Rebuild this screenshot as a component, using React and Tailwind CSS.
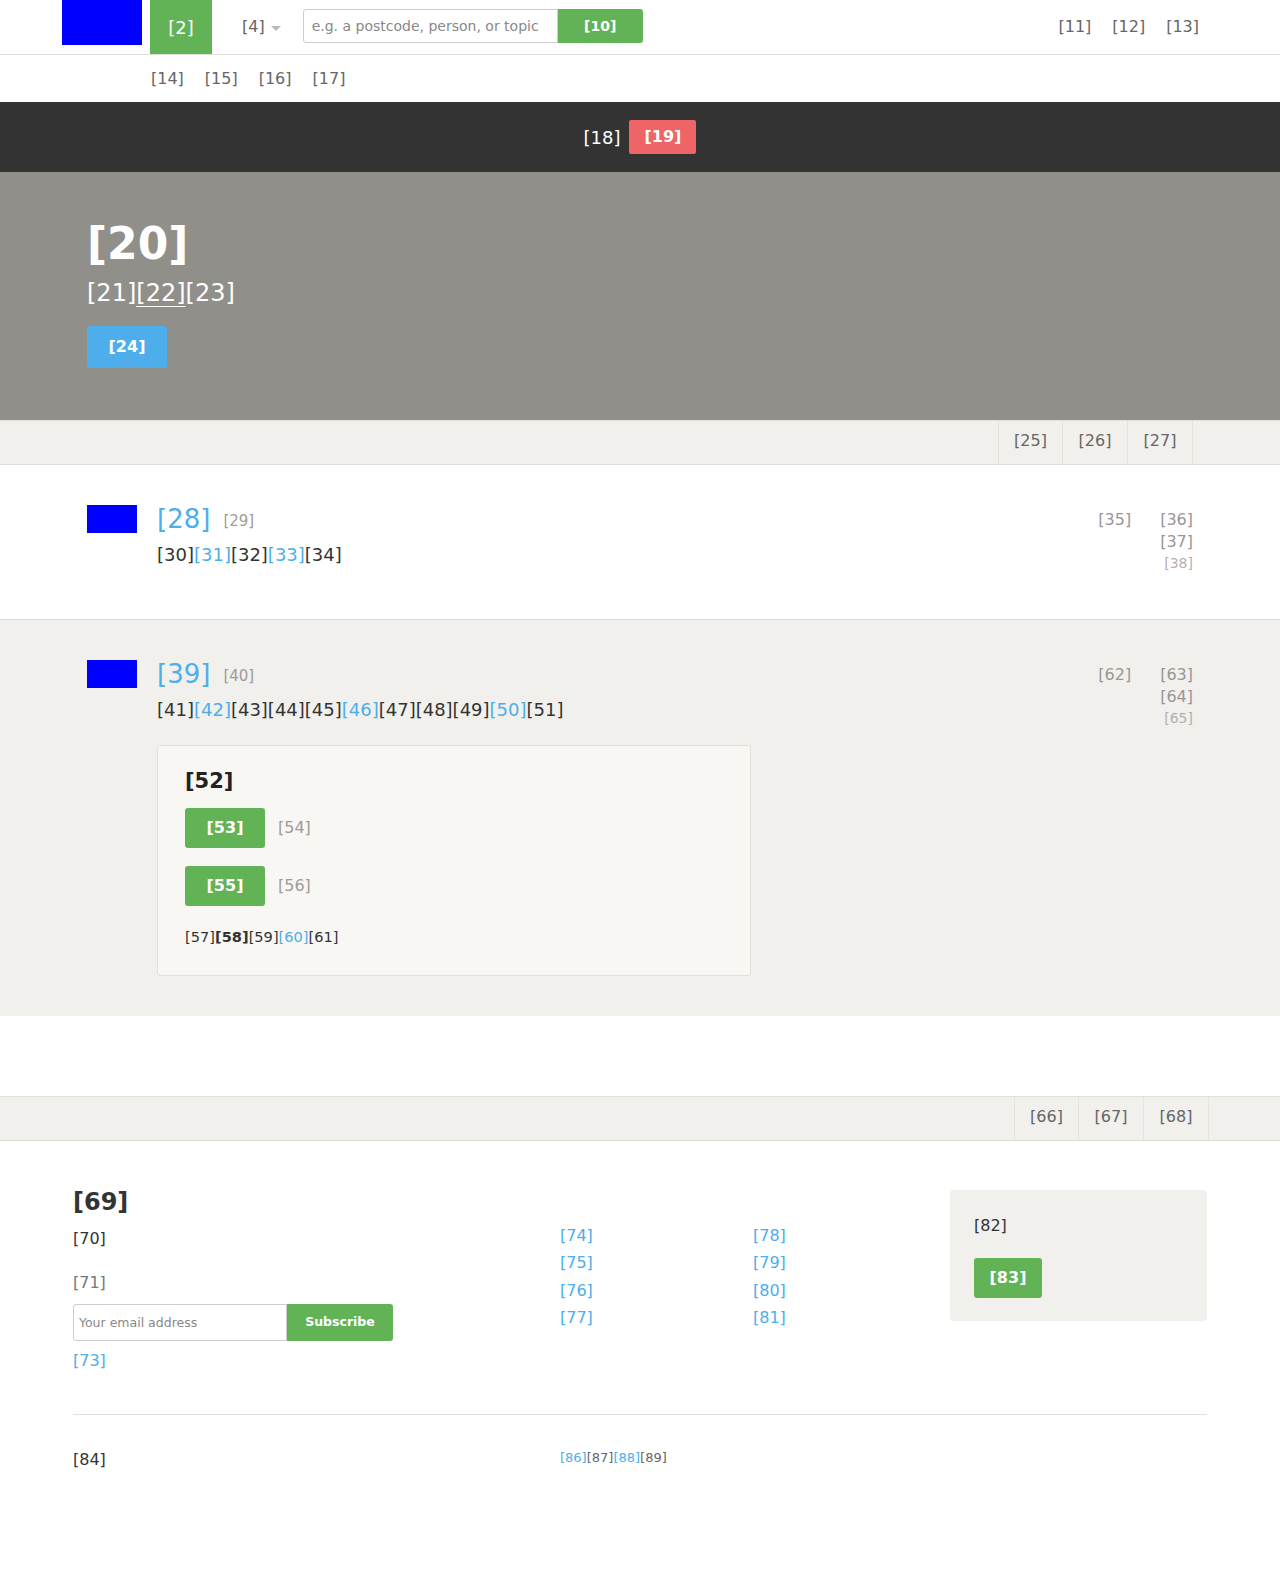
import React from "react";

const font = { fontFamily: '"DejaVu Sans", Verdana, sans-serif' };

function Header() {
  return (
    <div>
      <div className="flex h-[55px] items-start border-b border-[#e0dfd8] pl-[62px] pr-[81px]">
        <div className="h-[45px] w-[80px] bg-[#0000ff]" />
        <a className="ml-[8px] flex h-[54px] w-[62px] items-center justify-center bg-[#62b356] text-[18px] text-white">
          [2]
        </a>
        <div className="ml-[30px] flex h-[54px] items-center text-[16px] text-[#666]">
          [4]
          <span className="ml-[6px] mt-[2px] inline-block border-x-[5px] border-t-[5px] border-x-transparent border-t-[#bbb]" />
        </div>
        <form className="ml-[22px] mt-[9px] flex h-[34px]">
          <input
            className="h-[34px] w-[255px] rounded-l-[3px] border border-[#ccc] px-[8px] text-[14px] text-[#555] placeholder:text-[#888] outline-none"
            placeholder="e.g. a postcode, person, or topic"
          />
          <button className="h-[34px] w-[85px] rounded-r-[3px] bg-[#62b356] text-[14px] font-bold text-white">
            [10]
          </button>
        </form>
        <nav className="ml-auto flex h-[54px] items-center gap-[21px] text-[16px] text-[#666]">
          <a>[11]</a>
          <a>[12]</a>
          <a>[13]</a>
        </nav>
      </div>
      <nav className="flex h-[47px] items-center gap-[21px] pl-[151px] text-[16px] text-[#666]">
        <a>[14]</a>
        <a>[15]</a>
        <a>[16]</a>
        <a>[17]</a>
      </nav>
    </div>
  );
}

function Banner() {
  return (
    <div className="flex h-[70px] items-center justify-center gap-[9px] bg-[#333]">
      <span className="text-[18px] text-white">[18]</span>
      <a className="flex h-[34px] w-[67px] items-center justify-center rounded-[2px] bg-[#ef6565] text-[16px] font-bold text-white">
        [19]
      </a>
    </div>
  );
}

function Hero() {
  return (
    <div className="h-[248px] bg-[#908f8a]">
      <div className="mx-auto w-[1106px] pt-[48px]">
        <h1 className="text-[44px] font-bold leading-[48px] text-white">[20]</h1>
        <p className="mt-[7px] text-[24px] leading-[36px] text-white">
          [21]<a className="underline decoration-1 underline-offset-[5px]">[22]</a>[23]
        </p>
        <a className="mt-[15px] flex h-[42px] w-[80px] items-center justify-center rounded-[3px] bg-[#4daeeb] text-[16px] font-bold text-white">
          [24]
        </a>
      </div>
    </div>
  );
}

function Tabs({ items, width }) {
  return (
    <div className="h-[45px] border-y border-[#e0dfd8] bg-[#f1f0ec]">
      <div className={`mx-auto flex h-full justify-end ${width}`}>
        {items.map((t, i) => (
          <a
            key={t}
            className={`flex h-full w-[65px] items-center justify-center border-r border-[#e3e2dd] pb-[3px] text-[16px] text-[#666] ${i === 0 ? "border-l" : ""}`}
          >
            {t}
          </a>
        ))}
      </div>
    </div>
  );
}

function Meta({ a, b, c, d }) {
  return (
    <div className="flex gap-[29px] pt-[6px] text-right">
      <span className="text-[16px] leading-[22px] text-[#9c9595]">{a}</span>
      <div className="flex flex-col items-end">
        <span className="text-[16px] leading-[22px] text-[#9c9595]">{b}</span>
        <span className="text-[16px] leading-[22px] text-[#9c9595]">{c}</span>
        <span className="text-[14px] leading-[21px] text-[#b5afaf]">{d}</span>
      </div>
    </div>
  );
}

function Blue({ children }) {
  return <a className="text-[#4daeeb]">{children}</a>;
}

function Title({ main, sub }) {
  return (
    <div className="flex items-center gap-[13px]">
      <a className="text-[26px] leading-[32px] text-[#4daeeb]">{main}</a>
      <span className="mt-[5px] text-[15px] text-[#a19a9a]">{sub}</span>
    </div>
  );
}

function ItemOne() {
  return (
    <div className="border-b border-[#e0dfd8] bg-white">
      <div className="mx-auto flex w-[1106px] pt-[38px] pb-[45px]">
        <div className="mt-[2px] h-[28px] w-[50px] shrink-0 bg-[#0000ff]" />
        <div className="ml-[20px] flex-1">
          <Title main="[28]" sub="[29]" />
          <p className="mt-[7px] text-[18px] leading-[26px] text-[#333]">
            [30]<Blue>[31]</Blue>[32]<Blue>[33]</Blue>[34]
          </p>
        </div>
        <Meta a="[35]" b="[36]" c="[37]" d="[38]" />
      </div>
    </div>
  );
}

function ItemTwo() {
  return (
    <div className="bg-[#f1f0ec]">
      <div className="mx-auto flex w-[1106px] pt-[38px] pb-[40px]">
        <div className="mt-[2px] h-[28px] w-[50px] shrink-0 bg-[#0000ff]" />
        <div className="ml-[20px] flex-1">
          <Title main="[39]" sub="[40]" />
          <p className="mt-[7px] text-[18px] leading-[26px] text-[#333]">
            [41]<Blue>[42]</Blue>[43][44][45]<Blue>[46]</Blue>[47][48][49]<Blue>[50]</Blue>[51]
          </p>
          <div className="mt-[22px] w-[594px] rounded-[3px] border border-[#e0dfd8] bg-[#f8f7f4] px-[27px] pt-[23px] pb-[27px]">
            <h3 className="text-[21px] font-bold leading-[25px] text-[#222]">[52]</h3>
            <div className="mt-[14px] flex items-center gap-[13px]">
              <a className="flex h-[40px] w-[80px] items-center justify-center rounded-[3px] bg-[#62b356] text-[16px] font-bold text-white">
                [53]
              </a>
              <span className="text-[16px] text-[#a19a9a]">[54]</span>
            </div>
            <div className="mt-[18px] flex items-center gap-[13px]">
              <a className="flex h-[40px] w-[80px] items-center justify-center rounded-[3px] bg-[#62b356] text-[16px] font-bold text-white">
                [55]
              </a>
              <span className="text-[16px] text-[#a19a9a]">[56]</span>
            </div>
            <p className="mt-[20px] text-[14.6px] leading-[22px] text-[#333]">
              [57]<b>[58]</b>[59]<Blue>[60]</Blue>[61]
            </p>
          </div>
        </div>
        <Meta a="[62]" b="[63]" c="[64]" d="[65]" />
      </div>
    </div>
  );
}

function Footer() {
  return (
    <div className="mx-auto w-[1134px] pt-[47px]">
      <div className="grid grid-cols-[487px_193px_197px_257px]">
        <div>
          <h2 className="text-[24px] font-bold leading-[29px] text-[#333]">[69]</h2>
          <p className="mt-[10px] text-[16px] leading-[24px] text-[#333]">[70]</p>
          <p className="mt-[20px] text-[16px] leading-[24px] text-[#777]">[71]</p>
          <form className="mt-[9px] flex h-[37px]">
            <input
              className="h-[37px] w-[214px] rounded-l-[3px] border border-[#ccc] px-[5px] text-[12.5px] placeholder:text-[#888] outline-none"
              placeholder="Your email address"
            />
            <button className="h-[37px] w-[106px] rounded-r-[3px] bg-[#62b356] text-[12.5px] font-bold text-white">
              Subscribe
            </button>
          </form>
          <a className="mt-[8px] block text-[16px] leading-[24px] text-[#4daeeb]">[73]</a>
        </div>
        <ul className="pt-[34px] text-[16px] leading-[27.4px] text-[#4daeeb]">
          <li>[74]</li>
          <li>[75]</li>
          <li>[76]</li>
          <li>[77]</li>
        </ul>
        <ul className="pt-[34px] text-[16px] leading-[27.4px] text-[#4daeeb]">
          <li>[78]</li>
          <li>[79]</li>
          <li>[80]</li>
          <li>[81]</li>
        </ul>
        <div className="mt-[2px] h-[131px] rounded-[4px] bg-[#f1f0ec] px-[24px] pt-[24px]">
          <p className="text-[16px] leading-[24px] text-[#333]">[82]</p>
          <a className="mt-[20px] flex h-[40px] w-[68px] items-center justify-center rounded-[3px] bg-[#62b356] text-[16px] font-bold text-white">
            [83]
          </a>
        </div>
      </div>
      <div className="mt-[41px] border-t border-[#e0dfd8]" />
      <div className="grid grid-cols-[487px_1fr] pt-[33px] pb-[96px]">
        <p className="text-[16px] leading-[24px] text-[#333]">[84]</p>
        <p className="text-[13px] leading-[20px] text-[#666]">
          <Blue>[86]</Blue>[87]<Blue>[88]</Blue>[89]
        </p>
      </div>
    </div>
  );
}

export default function App() {
  return (
    <div className="min-h-[1579px] bg-white" style={font}>
      <Header />
      <Banner />
      <Hero />
      <Tabs items={["[25]", "[26]", "[27]"]} width="w-[1106px]" />
      <ItemOne />
      <ItemTwo />
      <div className="h-[80px] bg-white" />
      <Tabs items={["[66]", "[67]", "[68]"]} width="w-[1138px]" />
      <Footer />
    </div>
  );
}
